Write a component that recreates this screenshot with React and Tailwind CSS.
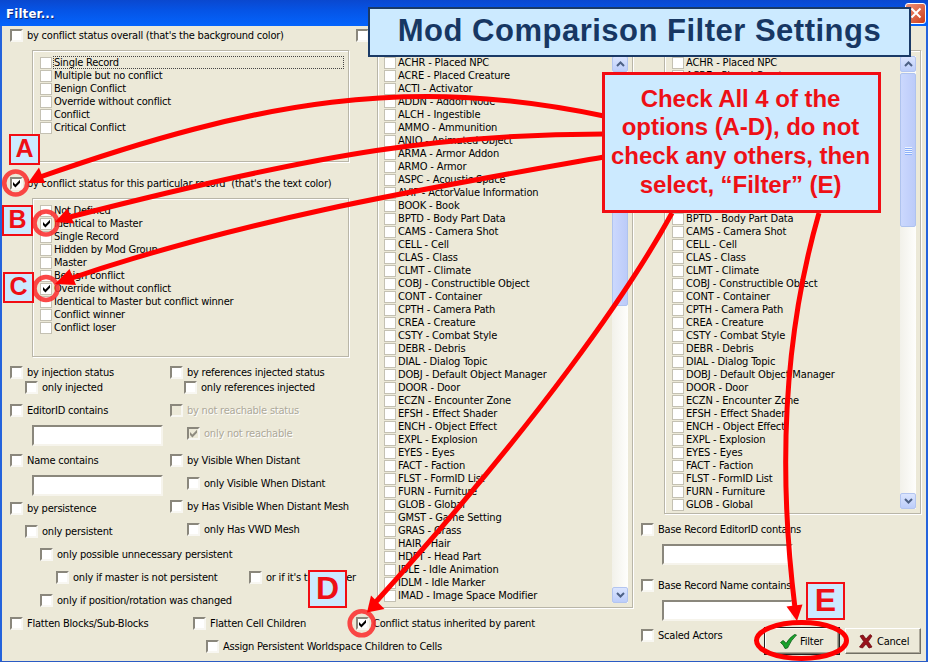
import React from "react";

const RECORDS = [
  "ACHR - Placed NPC",
  "ACRE - Placed Creature",
  "ACTI - Activator",
  "ADDN - Addon Node",
  "ALCH - Ingestible",
  "AMMO - Ammunition",
  "ANIO - Animated Object",
  "ARMA - Armor Addon",
  "ARMO - Armor",
  "ASPC - Acoustic Space",
  "AVIF - ActorValue Information",
  "BOOK - Book",
  "BPTD - Body Part Data",
  "CAMS - Camera Shot",
  "CELL - Cell",
  "CLAS - Class",
  "CLMT - Climate",
  "COBJ - Constructible Object",
  "CONT - Container",
  "CPTH - Camera Path",
  "CREA - Creature",
  "CSTY - Combat Style",
  "DEBR - Debris",
  "DIAL - Dialog Topic",
  "DOBJ - Default Object Manager",
  "DOOR - Door",
  "ECZN - Encounter Zone",
  "EFSH - Effect Shader",
  "ENCH - Object Effect",
  "EXPL - Explosion",
  "EYES - Eyes",
  "FACT - Faction",
  "FLST - FormID List",
  "FURN - Furniture",
  "GLOB - Global",
  "GMST - Game Setting",
  "GRAS - Grass",
  "HAIR - Hair",
  "HDPT - Head Part",
  "IDLE - Idle Animation",
  "IDLM - Idle Marker",
  "IMAD - Image Space Modifier",
];

const OVERALL = [
  "Single Record",
  "Multiple but no conflict",
  "Benign Conflict",
  "Override without conflict",
  "Conflict",
  "Critical Conflict",
];

const PARTICULAR = [
  "Not Defined",
  "Identical to Master",
  "Single Record",
  "Hidden by Mod Group",
  "Master",
  "Benign conflict",
  "Override without conflict",
  "Identical to Master but conflict winner",
  "Conflict winner",
  "Conflict loser",
];

function Tick({ color = "#000" }) {
  return (
    <svg viewBox="0 0 9 9" className="h-[9px] w-[9px] shrink-0">
      <path d="M1 3 L3.4 5.4 L8 0.800 V3.8 L3.4 8.4 L1 6 Z" fill={color} />
    </svg>
  );
}

/* Sunken check box with its caption */
function Option({ children, checked, disabled, className = "" }) {
  return (
    <div className={`flex h-[13px] shrink-0 items-center whitespace-nowrap ${className}`}>
      <span
        className={`flex h-[13px] w-[13px] shrink-0 items-center justify-center border-2 border-t-[#8a877c] border-l-[#8a877c] border-r-[#f8f7f2] border-b-[#f8f7f2] ${disabled ? "bg-[#ece9d8]" : "bg-white"}`}
      >
        {checked && <Tick color={disabled ? "#8f8c80" : "#000"} />}
      </span>
      <span className={`ml-[4px] ${disabled ? "text-[#aca899] [text-shadow:1px_1px_0_#fff]" : ""}`}>
        {children}
      </span>
    </div>
  );
}

/* Flat check box line of a list */
function Item({ children, checked, focused }) {
  return (
    <div className="flex h-[13px] items-center whitespace-nowrap">
      <span className="flex h-[12px] w-[12px] shrink-0 items-center justify-center border border-[#c4c1b3] bg-white">
        {checked && <Tick />}
      </span>
      <span
        className={
          focused
            ? "ml-[1px] flex h-[13px] flex-1 items-center border border-dotted border-[#444]"
            : "ml-[2px]"
        }
      >
        {children}
      </span>
    </div>
  );
}

function Field({ className = "" }) {
  return (
    <div
      className={`h-[21px] w-[131px] shrink-0 border-2 border-t-[#8a877c] border-l-[#8a877c] border-r-[#f6f4ec] border-b-[#f6f4ec] bg-white ${className}`}
    />
  );
}

function Group({ children, className = "" }) {
  return (
    <div
      className={`shrink-0 border border-[#b9b6a8] shadow-[1px_1px_0_#fff,inset_1px_1px_0_#fff] ${className}`}
    >
      {children}
    </div>
  );
}

function ArrowButton({ down }) {
  return (
    <div className="flex h-4 w-4 shrink-0 items-center justify-center rounded-[2px] border border-[#b3c5f0] bg-linear-to-b from-[#dbe5fe] to-[#bccdfa]">
      <svg viewBox="0 0 9 6" className="h-[6px] w-[9px]">
        <path
          d={down ? "M1 1 L4.5 4.5 L8 1" : "M1 5 L4.5 1.5 L8 5"}
          fill="none"
          stroke="#4d6185"
          strokeWidth="2"
        />
      </svg>
    </div>
  );
}

function ScrollBar({ className = "", thumb, grip }) {
  return (
    <div className={`flex w-4 shrink-0 flex-col bg-linear-to-r from-[#f2f1ea] to-[#fefefc] ${className}`}>
      <ArrowButton />
      <div
        className={`mt-px flex w-4 flex-col items-center justify-center gap-px rounded-[2px] border border-[#afc3ee] bg-linear-to-r from-[#cbd8fd] to-[#bccbf9] ${thumb}`}
      >
        {grip &&
          [0, 1, 2, 3].map((i) => <span key={i} className="h-px w-[7px] bg-[#eef4fe] shadow-[0_1px_0_#8cb0f8]" />)}
      </div>
      <div className="flex-1" />
      <ArrowButton down />
    </div>
  );
}

function PushButton({ children, className = "" }) {
  return (
    <div
      className={`flex h-[26px] items-center border border-t-white border-l-white border-r-[#716f64] border-b-[#716f64] bg-[#ece9d8] shadow-[inset_-1px_-1px_0_#aca899] ${className}`}
    >
      {children}
    </div>
  );
}

function Tag({ children, className }) {
  return (
    <div
      className={`absolute flex items-center justify-center border-2 border-[#f20d14] bg-[#cceaff] pb-[3px] font-['Liberation_Sans',Arial,sans-serif] font-bold leading-none tracking-normal text-[#ee1016] ${className}`}
    >
      {children}
    </div>
  );
}

function Annotations() {
  return (
    <>
      <svg viewBox="0 0 930 663" className="absolute top-0 left-0 h-[663px] w-[930px]">
        <g fill="none" stroke="#fb2f2f" strokeOpacity="0.88" strokeWidth="4.6">
          <circle cx="15.7" cy="183" r="11.5" />
          <circle cx="46" cy="223" r="11.5" />
          <circle cx="46" cy="288.5" r="11.5" />
          <circle cx="361.7" cy="623.3" r="12" />
        </g>
        <g fill="none" stroke="#ff0000" strokeWidth="5">
          <path d="M604 116 C410 75 260 100 40 177" />
          <path d="M604 134 C450 134 330 150 66 218" />
          <path d="M604 157 C440 186 250 217 66 280" />
          <path d="M672 213 C630 290 540 420 374 604" />
          <path d="M819 213 C794 300 773 430 795 608" />
          <ellipse cx="801.5" cy="640.5" rx="45" ry="18" />
        </g>
        <g fill="#ff0000">
          <path d="M28 183 L39 167.500 L45 183 Z" />
          <path d="M55 222 L67.500 208.500 L74 223.500 Z" />
          <path d="M55 284 L69.500 269 L76 285 Z" />
          <path d="M367 612.500 L371 595.500 L384.500 609 Z" />
          <path d="M797 621 L786.500 606.500 L802.500 604.500 Z" />
        </g>
      </svg>
      <div className="absolute top-[7px] left-[368px] flex h-[50px] w-[543px] items-center justify-center border-2 border-[#1a3a66] bg-[#cceaff] pb-[3px] font-['Liberation_Sans',Arial,sans-serif] text-[31px] font-bold tracking-[0.5px] whitespace-nowrap text-[#173763]">
        Mod Comparison Filter Settings
      </div>
      <div className="absolute top-[72px] left-[602px] flex h-[141px] w-[279px] items-center justify-center border-[3px] border-[#f20d14] bg-[#cceaff] pr-[2px] pb-px text-center font-['Liberation_Sans',Arial,sans-serif] text-[24px] leading-[28.7px] font-bold tracking-[-0.05px] whitespace-nowrap text-[#ee1016]">
        <div>
          Check All 4 of the
          <br />
          options (A-D), do not
          <br />
          check any others, then
          <br />
          select, “Filter” (E)
        </div>
      </div>
      <Tag className="top-[134px] left-[9px] h-[31px] w-[31px] text-[25px]">A</Tag>
      <Tag className="top-[205px] left-[2px] h-[31px] w-[31px] text-[25px]">B</Tag>
      <Tag className="top-[272px] left-[3px] h-[31px] w-[31px] text-[25px]">C</Tag>
      <Tag className="top-[570px] left-[308px] h-[38px] w-[39px] text-[32px]">D</Tag>
      <Tag className="top-[582px] left-[806px] h-[38px] w-[39px] text-[32px]">E</Tag>
    </>
  );
}

export default function App() {
  return (
    <div className="relative h-[663px] w-[930px] overflow-hidden bg-white font-['DejaVu_Sans_Condensed','DejaVu_Sans',Tahoma,sans-serif] text-[11px] leading-[13px] tracking-[-0.22px] text-black">
      <div className="flex h-[662px] w-[928px] flex-col border-b border-[#2a5bc4] bg-[#ece9d8]">
        <header className="flex h-[26px] shrink-0 items-center justify-between bg-linear-to-b from-[#0a48cf] via-[#0554e6] via-40% to-[#0464fc] pr-[2px] pl-[6px]">
          <span className="font-['DejaVu_Sans_Condensed','DejaVu_Sans',sans-serif] text-[13px] font-bold tracking-[0.2px] text-white [text-shadow:1px_1px_0_#0a2a80]">
            Filter...
          </span>
          <span className="flex h-[21px] w-[21px] items-center justify-center rounded-[3px] border border-white bg-linear-to-br from-[#ee9278] to-[#cc3a12]">
            <svg viewBox="0 0 12 12" className="h-3 w-3">
              <path d="M1.500 1.500 L10.500 10.500 M10.500 1.500 L1.500 10.500" stroke="#fff" strokeWidth="2" />
            </svg>
          </span>
        </header>

        <div className="flex min-h-0 flex-1 border-x-2 border-[#2463dc]">
          <section className="flex w-[354px] shrink-0 flex-col pl-2">
            <Option className="mt-[3px]">by conflict status overall (that's the background color)</Option>
            <Group className="mt-2 ml-[22px] h-[112px] w-[317px] py-[5px] pr-[4px] pl-[7px]">
              {OVERALL.map((t, i) => (
                <Item key={t} focused={i === 0}>
                  {t}
                </Item>
              ))}
            </Group>
            <Option checked className="mt-[15px]">
              by conflict status for this particular record &nbsp;(that's the text color)
            </Option>
            <Group className="mt-2 ml-[22px] h-[159px] w-[317px] py-[5px] pl-[7px]">
              {PARTICULAR.map((t, i) => (
                <Item key={t} checked={i === 1 || i === 6}>
                  {t}
                </Item>
              ))}
            </Group>

            <div className="mt-[9px] flex">
              <div className="flex w-40 shrink-0 flex-col">
                <Option>by injection status</Option>
                <Option className="mt-[2px] ml-[15px]">only injected</Option>
                <Option className="mt-[10px]">EditorID contains</Option>
                <Field className="mt-2 ml-[22px]" />
                <Option className="mt-[8px]">Name contains</Option>
                <Field className="mt-2 ml-[22px]" />
                <Option className="mt-[6px]">by persistence</Option>
                <Option className="mt-[10px] ml-[15px]">only persistent</Option>
                <Option className="mt-[10px] ml-[30px]">only possible unnecessary persistent</Option>
                <Option className="mt-[10px] ml-[46px]">only if master is not persistent</Option>
                <Option className="mt-[10px] ml-[30px]">only if position/rotation was changed</Option>
                <Option className="mt-[10px]">Flatten Blocks/Sub-Blocks</Option>
              </div>
              <div className="flex flex-1 flex-col">
                <Option>by references injected status</Option>
                <Option className="mt-[2px] ml-[14px]">only references injected</Option>
                <Option disabled className="mt-[10px]">
                  by not reachable status
                </Option>
                <Option disabled checked className="mt-[10px] ml-[17px]">
                  only not reachable
                </Option>
                <Option className="mt-[14px]">by Visible When Distant</Option>
                <Option className="mt-[10px] ml-[17px]">only Visible When Distant</Option>
                <Option className="mt-[10px]">by Has Visible When Distant Mesh</Option>
                <Option className="mt-[10px] ml-[17px]">only Has VWD Mesh</Option>
                <Option className="mt-[35px] ml-[79px]">or if it's the master</Option>
                <Option className="mt-[33px] ml-[23px]">Flatten Cell Children</Option>
                <Option className="mt-[10px] ml-[36px]">Assign Persistent Worldspace Children to Cells</Option>
              </div>
            </div>
          </section>

          <section className="flex w-[285px] shrink-0 flex-col">
            <Option className="mt-[3px]" />
            <Group className="mt-2 ml-[21px] flex h-[558px] w-[256px] justify-between py-[5px] pr-[4px] pl-[6px]">
              <div className="h-[547px] overflow-hidden tracking-[-0.15px]">
                {RECORDS.map((t) => (
                  <Item key={t}>{t}</Item>
                ))}
                <Item />
              </div>
              <ScrollBar className="h-[547px]" thumb="h-[233px]" />
            </Group>
            <Option checked className="mt-[9px]">
              Conflict status inherited by parent
            </Option>
          </section>

          <section className="flex flex-1 flex-col">
            <Group className="mt-6 ml-[23px] flex h-[464px] w-[257px] justify-between py-[5px] pr-[4px] pl-[7px]">
              <div className="tracking-[-0.15px]">
                {RECORDS.slice(0, 35).map((t) => (
                  <Item key={t}>{t}</Item>
                ))}
              </div>
              <ScrollBar className="h-[453px]" thumb="h-[154px]" grip />
            </Group>
            <Option className="mt-[9px]">Base Record EditorID contains</Option>
            <Field className="mt-2 ml-[21px]" />
            <Option className="mt-[14px]">Base Record Name contains</Option>
            <Field className="mt-[8px] ml-[21px]" />
            <div className="mt-[7px] flex items-start">
              <Option className="mt-px w-[124px]">Scaled Actors</Option>
              <PushButton className="w-[74px] pl-[14px] outline-1 outline-[#222]">
                <svg viewBox="0 0 17 15" className="h-[15px] w-[17px] shrink-0">
                  <path
                    d="M0.500 8.500 L3 6.500 Q5 7.500 6 9.500 Q9.500 3.500 14.500 0.500 L16.500 1 Q11 6 7.500 14 L5 14.500 Q3.500 10.500 0.500 8.500 Z"
                    fill="#19a22c"
                    stroke="#0b5d17"
                    strokeWidth="0.8"
                  />
                </svg>
                <span className="ml-[3px]">Filter</span>
              </PushButton>
              <PushButton className="ml-[6px] w-[76px] pl-[13px]">
                <svg viewBox="0 0 14 15" className="h-[15px] w-[14px] shrink-0">
                  <path
                    d="M1 2 L4 1 L7 5 L11 0.500 L13 2 L9.300 7.500 L13 13 L10 14 L7 10 L3.500 14 L0.500 13 L4.700 7.500 Z"
                    fill="#98121b"
                    stroke="#6d0a10"
                    strokeWidth="0.8"
                  />
                </svg>
                <span className="ml-[4px]">Cancel</span>
              </PushButton>
            </div>
          </section>
        </div>
      </div>
      <Annotations />
    </div>
  );
}
